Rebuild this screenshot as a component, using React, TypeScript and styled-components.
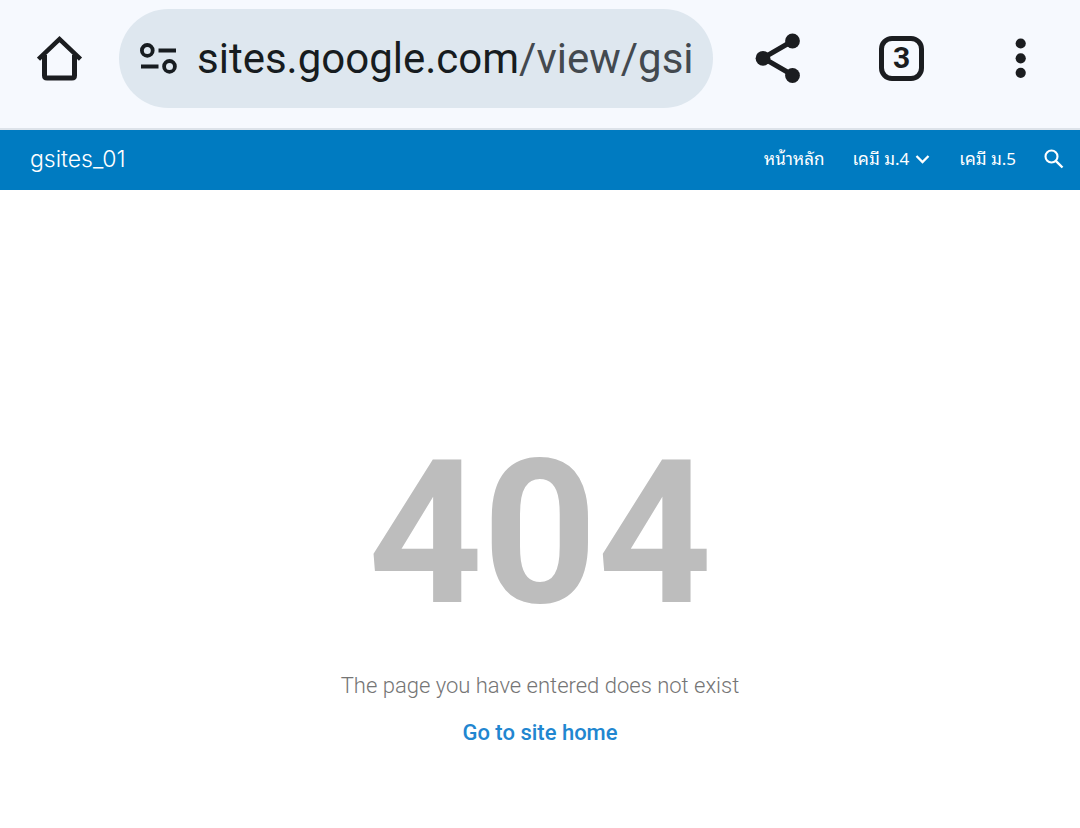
import React from "react";
import styled, { createGlobalStyle } from "styled-components";

const GlobalStyle = createGlobalStyle`
  *, *::before, *::after { box-sizing: border-box; }
  body {
    margin: 0;
    background: #ffffff;
    font-family: Roboto, "Liberation Sans", sans-serif;
  }
  button { border: 0; padding: 0; margin: 0; background: none; cursor: pointer; }
  svg { display: block; }
`;

const Toolbar = styled.header`
  display: flex;
  align-items: center;
  height: 130px;
  padding: 0 0 12px;
  background: #f6f9fe;
  border-bottom: 2px solid #dde3ea;
`;

const ToolButton = styled.button<{ $wide?: boolean }>`
  display: flex;
  flex: none;
  align-items: center;
  justify-content: center;
  width: ${(p) => (p.$wide ? 129 : 119)}px;
  height: 98px;
  color: #1b1d20;
`;

const Omnibox = styled.div`
  display: flex;
  flex: 1;
  align-items: center;
  min-width: 0;
  height: 99px;
  padding: 0 20px;
  border-radius: 50px;
  background: #dee7ef;
`;

const SiteInfoButton = styled.button`
  flex: none;
  margin-right: 20px;
  color: #171c20;
`;

const Address = styled.button`
  flex: 1;
  min-width: 0;
  padding-top: 2px;
  overflow: hidden;
  color: #43494f;
  font-family: Roboto, "Liberation Sans", sans-serif;
  font-size: 42px;
  line-height: 60px;
  text-align: left;
  white-space: nowrap;
`;

const Host = styled.span`
  color: #171c20;
`;

const TabCount = styled.span`
  display: flex;
  align-items: center;
  justify-content: center;
  width: 45px;
  height: 45px;
  border: 5px solid #1b1d20;
  border-radius: 13px;
  font-family: Roboto, "Liberation Sans", sans-serif;
  font-size: 30px;
  font-weight: 700;
  line-height: 34px;
`;

const SiteBar = styled.div`
  display: flex;
  align-items: center;
  justify-content: space-between;
  height: 60px;
  padding: 0 16px 2px 30px;
  background: #007bc1;
`;

const SiteName = styled.a`
  color: #ffffff;
  font-family: Inter, "Liberation Sans", sans-serif;
  font-size: 23px;
  font-weight: 300;
  line-height: 30px;
  text-decoration: none;
`;

const SiteNav = styled.nav`
  display: flex;
  align-items: center;
  gap: 28px;
`;

const NavItem = styled.div`
  display: flex;
  align-items: center;
  gap: 6px;
`;

const NavLink = styled.a`
  padding-bottom: 2px;
  color: #ffffff;
  font-family: "Noto Sans Thai Looped", Loma, "Noto Sans", "Open Sans", sans-serif;
  font-size: 17px;
  line-height: 30px;
  text-decoration: none;
  white-space: nowrap;
`;

const NavButton = styled.button`
  color: #ffffff;
`;

const ErrorPage = styled.main`
  display: flex;
  flex-direction: column;
  align-items: center;
  padding: 227px 16px 80px;
  text-align: center;
`;

const ErrorCode = styled.h1`
  margin: 0;
  color: #bdbdbd;
  font-size: 200px;
  font-weight: 700;
  line-height: 234px;
`;

const Message = styled.p`
  margin: 19px 0 0;
  color: #757575;
  font-size: 22px;
  font-weight: 300;
  line-height: 32px;
`;

const HomeLink = styled.a`
  margin-top: 15px;
  color: #2186d0;
  font-size: 22px;
  font-weight: 500;
  line-height: 32px;
  text-decoration: none;
`;

const HomeIcon = () => (
  <svg width="46" height="46" viewBox="0 0 46 46" fill="none" stroke="currentColor" strokeWidth="5" aria-hidden="true">
    <path d="M1.500 24.200 L22.500 4.200 L43.500 24.200" strokeWidth="4.600" />
    <path d="M7.500 20 V40.500 Q7.500 43 10 43 H35 Q37.500 43 37.500 40.500 V20" />
  </svg>
);

const TuneIcon = () => (
  <svg width="38" height="32" viewBox="0 0 38 32" fill="none" stroke="currentColor" strokeWidth="3.800" aria-hidden="true">
    <circle cx="8.300" cy="8.400" r="5.400" />
    <path d="M19.500 8.500 H37 M2 24.500 H19.500" />
    <circle cx="30.500" cy="24.400" r="5.400" />
  </svg>
);

const ShareIcon = () => (
  <svg width="46" height="50" viewBox="0 0 46 50" aria-hidden="true">
    <path d="M37.500 8 L8 25 L37.500 42" fill="none" stroke="currentColor" strokeWidth="5" />
    <g fill="currentColor">
      <circle cx="37.500" cy="8" r="7.400" />
      <circle cx="8" cy="25.300" r="7.400" />
      <circle cx="37.500" cy="42.500" r="7.400" />
    </g>
  </svg>
);

const MoreIcon = () => (
  <svg width="12" height="40" viewBox="0 0 12 40" fill="currentColor" aria-hidden="true">
    <circle cx="5.700" cy="5.500" r="5.100" />
    <circle cx="5.700" cy="20.300" r="5.100" />
    <circle cx="5.700" cy="34.800" r="5.100" />
  </svg>
);

const ChevronIcon = () => (
  <svg width="16" height="10" viewBox="0 0 16 10" fill="none" stroke="currentColor" strokeWidth="2.300" aria-hidden="true">
    <path d="M1.500 2 L7.500 8 L13.500 2" />
  </svg>
);

const SearchIcon = () => (
  <svg width="20" height="20" viewBox="0 0 20 20" fill="none" stroke="currentColor" aria-hidden="true">
    <circle cx="7.500" cy="7.500" r="6" strokeWidth="2.100" />
    <path d="M11.800 11.800 L18.500 18.500" strokeWidth="2.400" />
  </svg>
);

export default function App() {
  return (
    <>
      <GlobalStyle />
      <Toolbar>
        <ToolButton type="button" aria-label="Home">
          <HomeIcon />
        </ToolButton>
        <Omnibox>
          <SiteInfoButton type="button" aria-label="Site information">
            <TuneIcon />
          </SiteInfoButton>
          <Address type="button">
            <Host>sites.google.com</Host>/view/gsit
          </Address>
        </Omnibox>
        <ToolButton type="button" aria-label="Share" $wide>
          <ShareIcon />
        </ToolButton>
        <ToolButton type="button" aria-label="Open tabs">
          <TabCount>3</TabCount>
        </ToolButton>
        <ToolButton type="button" aria-label="More options">
          <MoreIcon />
        </ToolButton>
      </Toolbar>
      <SiteBar>
        <SiteName href="#home">gsites_01</SiteName>
        <SiteNav>
          <NavLink href="#home">หน้าหลัก</NavLink>
          <NavItem>
            <NavLink href="#m4">เคมี ม.4</NavLink>
            <NavButton type="button" aria-label="Expand menu">
              <ChevronIcon />
            </NavButton>
          </NavItem>
          <NavLink href="#m5">เคมี ม.5</NavLink>
          <NavButton type="button" aria-label="Search">
            <SearchIcon />
          </NavButton>
        </SiteNav>
      </SiteBar>
      <ErrorPage>
        <ErrorCode>404</ErrorCode>
        <Message>The page you have entered does not exist</Message>
        <HomeLink href="#home">Go to site home</HomeLink>
      </ErrorPage>
    </>
  );
}
